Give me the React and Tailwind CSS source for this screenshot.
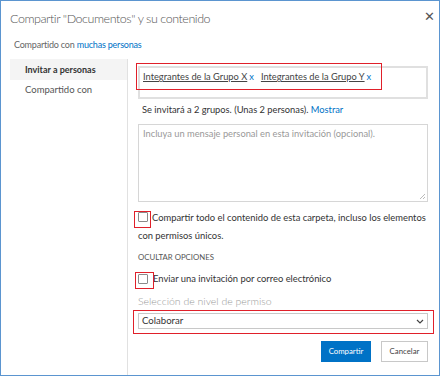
import React from 'react';

const font = { fontFamily: 'Lato, "Open Sans", sans-serif' };

function Checkbox() {
  return <span className="inline-block align-[-1px] w-[10px] h-[10px] border border-[#8a8a8a] bg-white rounded-[1px] shrink-0" />;
}

function Tag({ label }) {
  return (
    <span className="mr-[7px]">
      <span className="underline text-[#444]">{label}</span>
      <span className="text-[#0072c6] ml-[2px]">x</span>
    </span>
  );
}

export default function App() {
  return (
    <div className="relative w-[440px] h-[376px] bg-white border border-[#5b95d0] overflow-hidden text-[#444]" style={font}>
      {/* header */}
      <div className="h-[36px] flex justify-between items-start pl-[9px] pr-[4px] pt-[7px]">
        <h1 className="text-[12.5px] font-light text-[#555] leading-[22px] tracking-[-0.45px]">Compartir "Documentos" y su contenido</h1>
        <span className="text-[13px] leading-[14px] text-[#555] mt-[1px]">✕</span>
      </div>
      <p className="pl-[13px] h-[16px] text-[9px] leading-[16px] tracking-[-0.2px] text-[#666]">
        Compartido con <span className="text-[#0072c6]">muchas personas</span>
      </p>

      {/* body */}
      <div className="flex mt-[6px]">
        <nav className="w-[118px] ml-[9px] border-r border-[#e1e1e1] h-[316px] text-[9.5px]">
          <div className="bg-[#f4f4f4] h-[21px] pl-[15px] leading-[21px] font-bold text-[#333] text-[9px]">Invitar a personas</div>
          <div className="pl-[15px] leading-[19px] text-[#555]">Compartido con</div>
        </nav>

        <div className="flex-1 pl-[10px] pr-[11px] pt-[7px] text-[9.3px]">
          <div className="h-[33px] border-2 border-[#e0e0e0] pl-[3px] pt-[1px] leading-[16px]">
            <Tag label="Integrantes de la Grupo X" />
            <Tag label="Integrantes de la Grupo Y" />
          </div>
          <p className="mt-[3px] pl-[4px] leading-[16px] text-[#333]">
            Se invitará a 2 grupos. (Unas 2 personas). <span className="text-[#0072c6]">Mostrar</span>
          </p>
          <div className="relative mt-[6px] h-[78px] border border-[#d6d6d6] px-[4px] pt-[1px] leading-[16px] text-[#999]">
            Incluya un mensaje personal en esta invitación (opcional).
            <svg className="absolute right-[1px] bottom-[1px]" width="7" height="7" viewBox="0 0 7 7">
              <path d="M6 1 L1 6 M6 4 L4 6" stroke="#aaa" strokeWidth="0.8" />
            </svg>
          </div>

          <div className="mt-[7px] text-[9.4px] leading-[18px] text-[#333]">
            <Checkbox />
            <span className="ml-[4px]">Compartir todo el contenido de esta carpeta, incluso los elementos con permisos únicos.</span>
          </div>

          <p className="mt-[6px] text-[7.8px] leading-[12px] text-[#555]">OCULTAR OPCIONES</p>

          <div className="mt-[8px] h-[16px] flex items-center text-[9.4px] leading-[16px] text-[#333]">
            <Checkbox />
            <span className="ml-[5px]">Enviar una invitación por correo electrónico</span>
          </div>

          <p className="mt-[6px] text-[10.5px] font-light leading-[16px] text-[#999]">Selección de nivel de permiso</p>

          <div className="mt-[4px] h-[16px] border border-[#c8c8c8] flex items-center justify-between pl-[3px] pr-[3px] text-[9.6px] text-[#333]">
            <span>Colaborar</span>
            <svg width="8" height="5" viewBox="0 0 8 5">
              <path d="M1 1 L4 4 L7 1" stroke="#444" strokeWidth="1.2" fill="none" />
            </svg>
          </div>

          <div className="mt-[12px] flex justify-end gap-[10px] text-[7.8px]">
            <button className="w-[50px] h-[21px] bg-[#0072c6] text-white border border-[#0072c6]">Compartir</button>
            <button className="w-[47px] h-[21px] bg-white text-[#444] border border-[#c8c8c8]">Cancelar</button>
          </div>
        </div>
      </div>

      {/* annotations */}
      <div className="absolute left-[135px] top-[62px] w-[246px] h-[27px] border border-[#e0202a]" />
      <div className="absolute left-[133px] top-[210px] w-[17px] h-[17px] border border-[#e0202a]" />
      <div className="absolute left-[134px] top-[271px] w-[19px] h-[17px] border border-[#e0202a]" />
      <div className="absolute left-[132px] top-[309px] w-[301px] h-[24px] border border-[#e0202a]" />
    </div>
  );
}
